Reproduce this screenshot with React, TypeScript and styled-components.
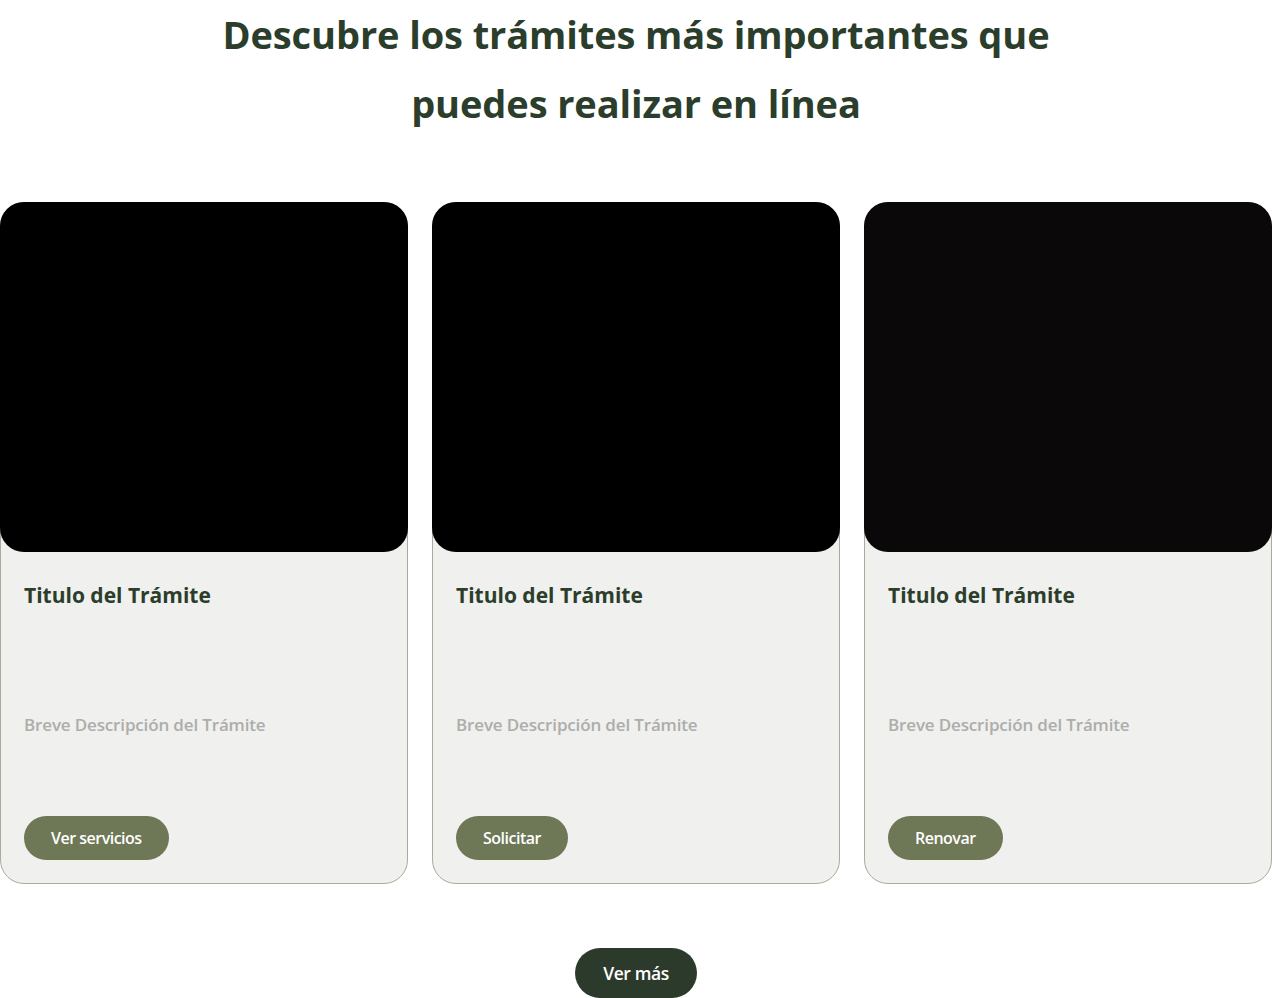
import styled, { createGlobalStyle } from 'styled-components'

const GlobalStyle = createGlobalStyle`
  html, body {
    margin: 0;
    padding: 0;
    background: #ffffff;
  }
  body {
    font-family: 'Open Sans', 'Noto Sans', sans-serif;
  }
  * {
    box-sizing: border-box;
  }
`

interface ITramite {
  title: string
  description: string
  action: string
  imageColor: string
}

const tramites: ITramite[] = [
  { title: 'Titulo del Trámite', description: 'Breve Descripción del Trámite', action: 'Ver servicios', imageColor: '#000000' },
  { title: 'Titulo del Trámite', description: 'Breve Descripción del Trámite', action: 'Solicitar', imageColor: '#000000' },
  { title: 'Titulo del Trámite', description: 'Breve Descripción del Trámite', action: 'Renovar', imageColor: '#0a0809' },
]

export default function App() {
  return (
    <Section>
      <GlobalStyle />
      <Heading>
        Descubre los trámites más importantes que
        <br />
        puedes realizar en línea
      </Heading>
      <CardsGrid>
        {tramites.map((tramite, index) => (
          <Card key={index}>
            <CardImage color={tramite.imageColor} />
            <CardBody>
              <CardTitle>{tramite.title}</CardTitle>
              <CardDescription>{tramite.description}</CardDescription>
              <ActionButton>{tramite.action}</ActionButton>
            </CardBody>
          </Card>
        ))}
      </CardsGrid>
      <MoreButton>Ver más</MoreButton>
    </Section>
  )
}

const Section = styled.section`
  align-items: center;
  display: flex;
  flex-direction: column;
  width: 1272px;
`

const Heading = styled.h2`
  color: #2b3d2b;
  font-size: 38px;
  font-weight: 700;
  letter-spacing: -0.1px;
  line-height: 69px;
  margin: 0 0 64px;
  text-align: center;
`

const CardsGrid = styled.div`
  display: grid;
  gap: 24px;
  grid-template-columns: repeat(3, 408px);
  margin-bottom: 64px;
`

const Card = styled.article`
  background-color: #f0f0ee;
  border: solid 1px #a9ac9a;
  border-radius: 24px;
  display: flex;
  flex-direction: column;
  height: 682px;
`

const CardImage = styled.div<{ color: string }>`
  background-color: ${({ color }) => color};
  border-radius: 24px;
  flex-shrink: 0;
  height: 350px;
  margin: -1px -1px 0;
`

const CardBody = styled.div`
  display: flex;
  flex: 1;
  flex-direction: column;
  padding: 28px 23px 22px;
`

const CardTitle = styled.h3`
  color: #2b3d2b;
  font-size: 21px;
  font-weight: 700;
  line-height: 30px;
  margin: 0;
`

const CardDescription = styled.p`
  color: #adadab;
  font-size: 17px;
  font-weight: 600;
  letter-spacing: -0.15px;
  line-height: 26px;
  margin: 102px 0 0;
`

const ActionButton = styled.button`
  align-self: flex-start;
  background-color: #6e7756;
  border: none;
  border-radius: 22px;
  color: #ffffff;
  font-family: 'Open Sans', sans-serif;
  font-size: 16px;
  font-weight: 600;
  height: 44px;
  letter-spacing: -0.5px;
  margin-top: auto;
  margin-bottom: 1px;
  padding: 0 27px;
`

const MoreButton = styled.button`
  background-color: #2b3a2b;
  border: none;
  border-radius: 25px;
  color: #ffffff;
  font-family: 'Open Sans', sans-serif;
  font-size: 17.5px;
  font-weight: 600;
  height: 50px;
  letter-spacing: -0.4px;
  padding: 0 28px;
`
